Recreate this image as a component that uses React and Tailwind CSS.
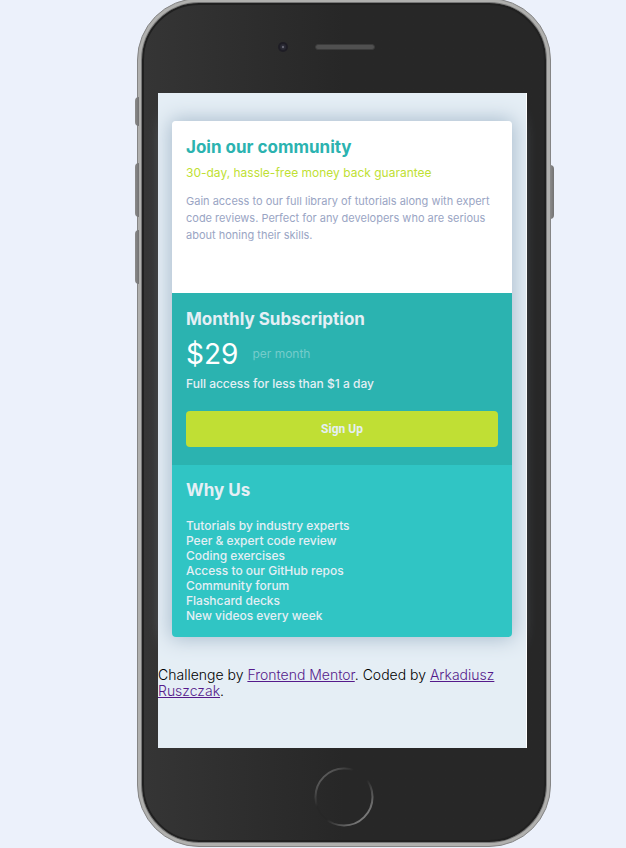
const reasons = [
  'Tutorials by industry experts',
  'Peer & expert code review',
  'Coding exercises',
  'Access to our GitHub repos',
  'Community forum',
  'Flashcard decks',
  'New videos every week',
];

function SideButton({ className }) {
  return <span aria-hidden="true" className={`absolute w-1 bg-linear-to-r from-[#8b8b8b] to-[#737373] ${className}`} />;
}

function Join() {
  return (
    <section className="bg-white px-3.5 pt-3.5 pb-[49px]">
      <h1 className="text-[17px] leading-6 font-bold text-[#2bb3b0]">Join our community</h1>
      <p className="mt-1 text-[12px] leading-5 text-[#c0df34]">30-day, hassle-free money back guarantee</p>
      <p className="mt-2.5 text-[11px] leading-[17px] text-[#9aa5c4]">
        Gain access to our full library of tutorials along with expert code reviews. Perfect for any developers who are
        serious about honing their skills.
      </p>
    </section>
  );
}

function Subscription() {
  return (
    <section className="bg-[#2bb3b0] px-3.5 pt-3.5 pb-[18px] text-[#e5eff5]">
      <h2 className="text-[17px] leading-6 font-bold">Monthly Subscription</h2>
      <div className="mt-[3px] flex h-10 items-center gap-3.5">
        <span className="text-[28px] leading-10 text-white">$29</span>
        <span className="text-[12px] text-[#75cccb]">per month</span>
      </div>
      <p className="text-[12px] leading-5 font-medium">Full access for less than $1 a day</p>
      <button type="button" className="mt-[17px] block h-9 w-full rounded bg-[#c0df34] font-[Roboto,sans-serif] text-[12px] font-bold">
        Sign Up
      </button>
    </section>
  );
}

function WhyUs() {
  return (
    <section className="bg-[#30c5c4] px-3.5 pt-[13px] pb-3.5 text-[#e5eff5]">
      <h2 className="text-[17px] leading-6 font-bold">Why Us</h2>
      <ul className="mt-4 text-[12px] leading-[15px] font-medium">
        {reasons.map((reason) => (
          <li key={reason}>{reason}</li>
        ))}
      </ul>
    </section>
  );
}

export default function App() {
  return (
    <div className="flex min-h-screen justify-center overflow-hidden bg-[#ecf1fb] pl-[62px] font-[Inter,sans-serif]">
      <div className="relative -mt-0.5 h-[849px] w-full max-w-[414px] rounded-[62px] border border-[#858585] bg-[#b0b0ae] p-1">
        <SideButton className="top-[98px] -left-[3px] h-[29px] rounded-l-sm" />
        <SideButton className="top-[164px] -left-[3px] h-[54px] rounded-l-sm" />
        <SideButton className="top-[231px] -left-[3px] h-[54px] rounded-l-sm" />
        <SideButton className="top-[166px] -right-[4px] h-[54px] rounded-r-sm" />
        <div className="flex h-full flex-col rounded-[57px] border-2 border-[#202020] bg-linear-to-r from-[#353535] via-[#272727] via-50% to-[#272727] pr-[17px] pl-3.5 shadow-[0_0_0_1px_#777]">
          <div className="flex h-[88px] shrink-0 items-center justify-center gap-[26px] pr-[34px] pb-1">
            <svg className="h-3 w-3" viewBox="0 0 12 12" aria-hidden="true">
              <circle cx="6" cy="6" r="5" fill="#1e1d25" />
              <circle cx="6" cy="6" r="3" fill="#2a2a34" />
              <circle cx="6" cy="6" r="1.2" fill="#666672" />
            </svg>
            <span className="h-1.5 w-[60px] rounded-full border border-[#3b3b3b] bg-[#505050]" />
          </div>
          <main className="h-[655px] shrink-0 border-r border-white bg-[#e5eef5] pt-7">
            <div className="mx-3.5 overflow-hidden rounded shadow-[0_0_20px_2px_#a9bccd]">
              <Join />
              <Subscription />
              <WhyUs />
            </div>
            <footer className="mt-[30px] text-[14px] leading-4 font-light text-black">
              Challenge by{' '}
              <a href="#mentor" className="text-[#551a8b] underline">Frontend Mentor</a>. Coded by{' '}
              <a href="#author" className="text-[#551a8b] underline">Arkadiusz Ruszczak</a>.
            </footer>
          </main>
          <div className="flex grow items-center justify-center pt-1.5 pl-[3px]">
            <svg className="h-[60px] w-[60px]" viewBox="0 0 60 60" fill="none" aria-hidden="true">
              <defs>
                <linearGradient id="ring" x1="0" y1="0" x2="1" y2="1">
                  <stop offset="0.1" stopColor="#646464" />
                  <stop offset="0.35" stopColor="#272727" />
                  <stop offset="0.55" stopColor="#272727" />
                  <stop offset="0.9" stopColor="#858585" />
                </linearGradient>
              </defs>
              <circle cx="30" cy="30" r="28.5" stroke="url(#ring)" strokeWidth="2" />
            </svg>
          </div>
        </div>
      </div>
    </div>
  );
}
